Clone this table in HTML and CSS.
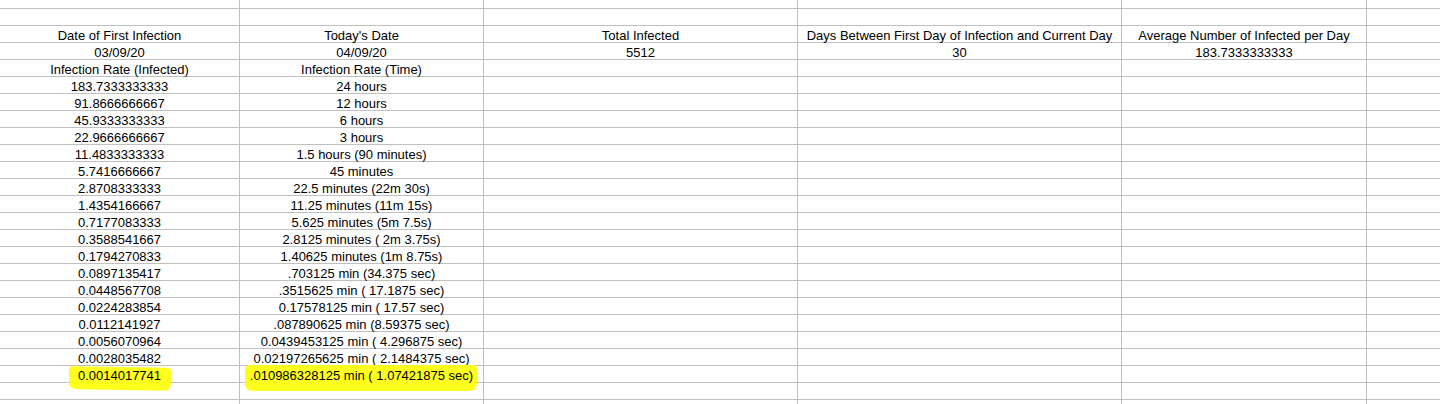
FILE: index.html
```html
<!DOCTYPE html>
<html>
<head>
<meta charset="utf-8">
<link rel="stylesheet" href="styles.css">
</head>
<body>
<div class="sheet">
  <div class="row"><div></div><div></div><div></div><div></div><div></div><div></div></div>
  <div class="row"><div></div><div></div><div></div><div></div><div></div><div></div></div>
  <div class="row"><div>Date of First Infection</div><div>Today's Date</div><div>Total Infected</div><div>Days Between First Day of Infection and Current Day</div><div>Average Number of Infected per Day</div><div></div></div>
  <div class="row"><div>03/09/20</div><div>04/09/20</div><div>5512</div><div>30</div><div>183.7333333333</div><div></div></div>
  <div class="row"><div>Infection Rate (Infected)</div><div>Infection Rate (Time)</div><div></div><div></div><div></div><div></div></div>
  <div class="row"><div>183.7333333333</div><div>24 hours</div><div></div><div></div><div></div><div></div></div>
  <div class="row"><div>91.8666666667</div><div>12 hours</div><div></div><div></div><div></div><div></div></div>
  <div class="row"><div>45.9333333333</div><div>6 hours</div><div></div><div></div><div></div><div></div></div>
  <div class="row"><div>22.9666666667</div><div>3 hours</div><div></div><div></div><div></div><div></div></div>
  <div class="row"><div>11.4833333333</div><div>1.5 hours (90 minutes)</div><div></div><div></div><div></div><div></div></div>
  <div class="row"><div>5.7416666667</div><div>45 minutes</div><div></div><div></div><div></div><div></div></div>
  <div class="row"><div>2.8708333333</div><div>22.5 minutes (22m 30s)</div><div></div><div></div><div></div><div></div></div>
  <div class="row"><div>1.4354166667</div><div>11.25 minutes (11m 15s)</div><div></div><div></div><div></div><div></div></div>
  <div class="row"><div>0.7177083333</div><div>5.625 minutes (5m 7.5s)</div><div></div><div></div><div></div><div></div></div>
  <div class="row"><div>0.3588541667</div><div>2.8125 minutes ( 2m 3.75s)</div><div></div><div></div><div></div><div></div></div>
  <div class="row"><div>0.1794270833</div><div>1.40625 minutes (1m 8.75s)</div><div></div><div></div><div></div><div></div></div>
  <div class="row"><div>0.0897135417</div><div>.703125 min (34.375 sec)</div><div></div><div></div><div></div><div></div></div>
  <div class="row"><div>0.0448567708</div><div>.3515625 min ( 17.1875 sec)</div><div></div><div></div><div></div><div></div></div>
  <div class="row"><div>0.0224283854</div><div>0.17578125 min ( 17.57 sec)</div><div></div><div></div><div></div><div></div></div>
  <div class="row"><div>0.0112141927</div><div>.087890625 min (8.59375 sec)</div><div></div><div></div><div></div><div></div></div>
  <div class="row"><div>0.0056070964</div><div>0.0439453125 min ( 4.296875 sec)</div><div></div><div></div><div></div><div></div></div>
  <div class="row"><div>0.0028035482</div><div>0.02197265625 min ( 2.1484375 sec)</div><div></div><div></div><div></div><div></div></div>
  <div class="row"><div><span class="hl hl-a">0.0014017741</span></div><div><span class="hl hl-b">.010986328125 min ( 1.07421875 sec)</span></div><div></div><div></div><div></div><div></div></div>
  <div class="row"><div></div><div></div><div></div><div></div><div></div><div></div></div>
  <div class="row"><div></div><div></div><div></div><div></div><div></div><div></div></div>
</div>
</body>
</html>
```

FILE: styles.css
```css
html, body {
  margin: 0;
  padding: 0;
  background: #ffffff;
  overflow: hidden;
}

.sheet {
  margin-top: -8px;
  font-family: "Liberation Sans", Arial, sans-serif;
  font-size: 13px;
  color: #000000;
}

.row {
  display: grid;
  grid-template-columns: 240px 244px 314px 324px 245px 1fr;
  height: 17px;
}

.row > div {
  box-sizing: border-box;
  height: 17px;
  padding-top: 1px;
  border-right: 1px solid #c0c0c0;
  border-bottom: 1px solid #c0c0c0;
  text-align: center;
  line-height: 17px;
  white-space: nowrap;
  overflow: visible;
}

.row > div:last-child {
  border-right: none;
}

.hl {
  position: relative;
  z-index: 0;
}

.hl::before {
  content: "";
  position: absolute;
  z-index: -1;
  background: #ffff1e;
}

.hl-a::before {
  left: -9px;
  right: -10px;
  top: -1px;
  bottom: -7px;
  border-radius: 3px 4px 6px 10px / 3px 4px 8px 4px;
  transform: skewY(1deg);
}

.hl-b::before {
  left: -5px;
  right: -4px;
  top: -3px;
  bottom: -8px;
  border-radius: 5px 4px 8px 8px / 4px 4px 8px 6px;
}
```
